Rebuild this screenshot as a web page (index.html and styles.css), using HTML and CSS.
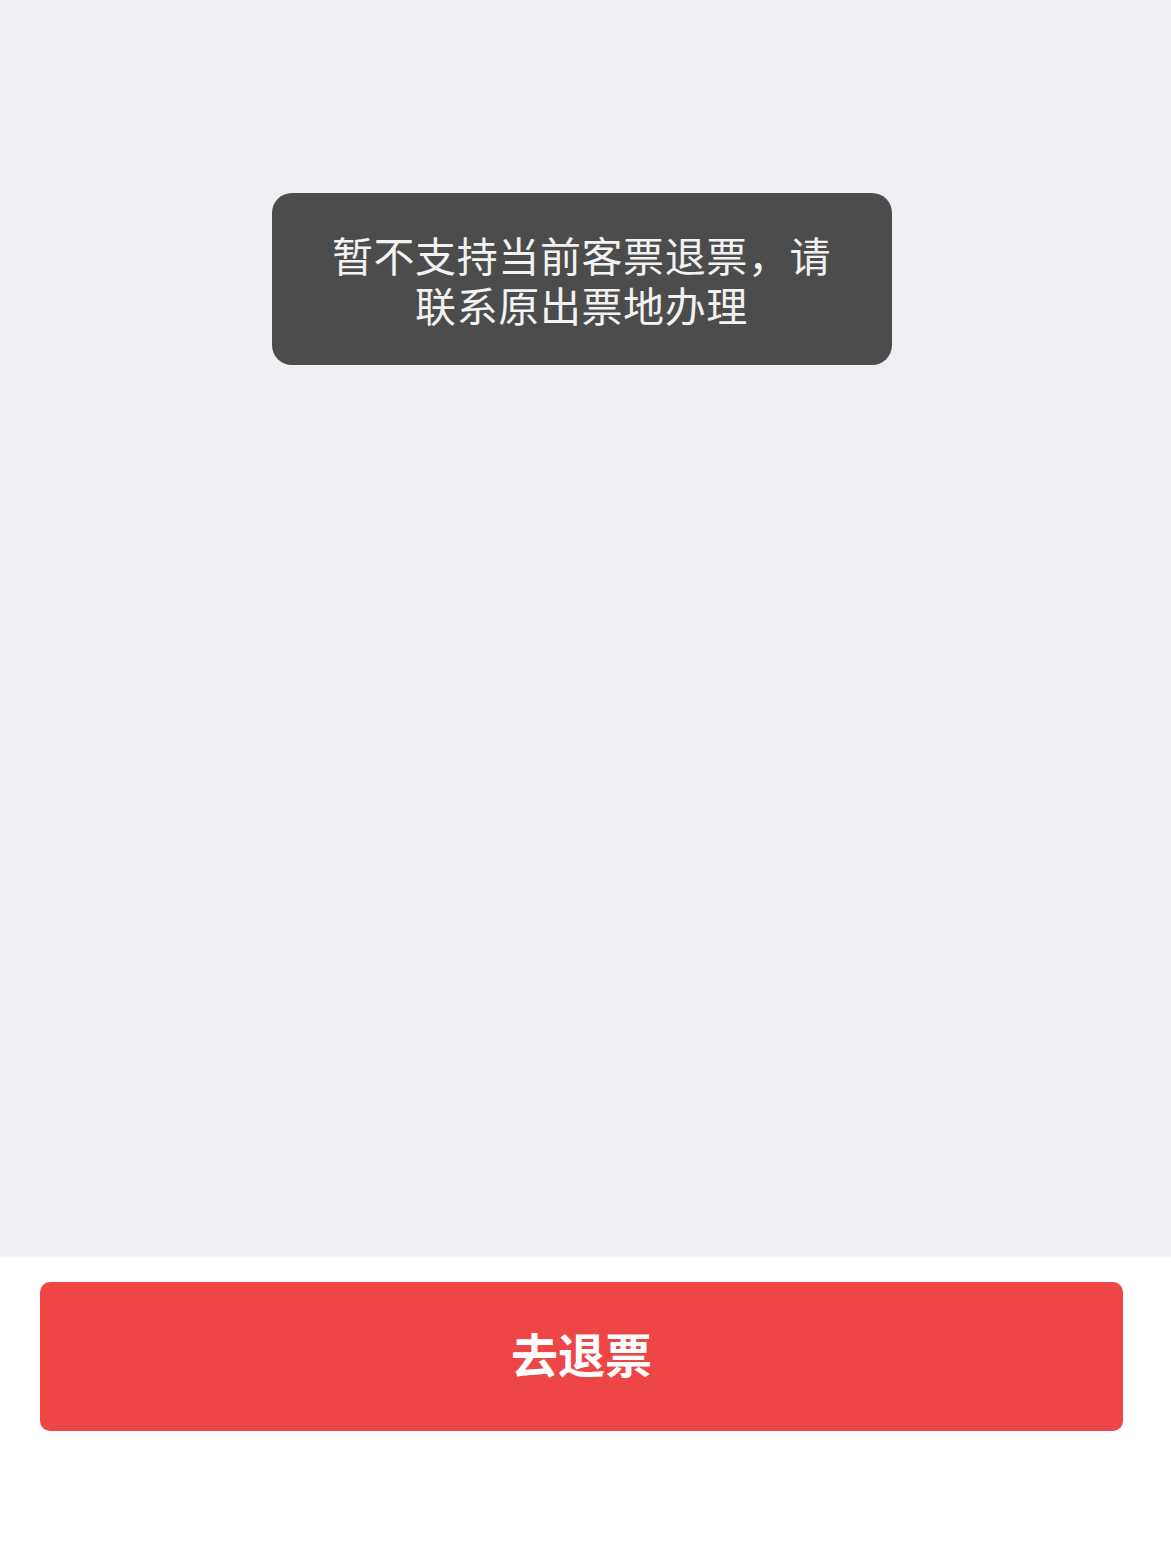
FILE: index.html
```html
<!DOCTYPE html>
<html lang="zh-CN">
<head>
    <meta charset="UTF-8">
    <meta name="viewport" content="width=device-width, initial-scale=1.0">
    <title>退票</title>
    <link rel="stylesheet" href="styles.css">
</head>
<body>
    <div class="page">
        <div class="content">
            <!-- Toast -->
            <div class="toast">暂不支持当前客票退票，请联系原出票地办理</div>
        </div>
        <div class="footer">
            <button class="refund-btn">去退票</button>
        </div>
    </div>
</body>
</html>
```

FILE: styles.css
```css
body {
    margin: 0;
    background-color: #ffffff;
    font-family: "Noto Sans CJK SC", "Noto Sans", sans-serif;
}

.page {
    width: 1163px;
}

.content {
    height: 1257px;
    background-color: #efeff4;
    display: flex;
    flex-direction: column;
    align-items: center;
    padding-top: 193px;
    box-sizing: border-box;
    margin-right: -8px;
}

.toast {
    width: 620px;
    box-sizing: border-box;
    padding: 36px 56px;
    background-color: #4c4c4c;
    color: #f2f2f2;
    border-radius: 20px;
    font-size: 41px;
    line-height: 50px;
    letter-spacing: 0.6px;
    text-align: center;
    margin-right: 8px;
}

.footer {
    padding: 25px 40px 0 40px;
}

.refund-btn {
    display: block;
    width: 100%;
    height: 149px;
    padding: 0 0 8px 0;
    border: none;
    border-radius: 10px;
    background-color: #ee4546;
    color: #ffffff;
    font-family: "Noto Sans CJK SC", "Noto Sans", sans-serif;
    font-size: 47px;
    font-weight: bold;
}
```
